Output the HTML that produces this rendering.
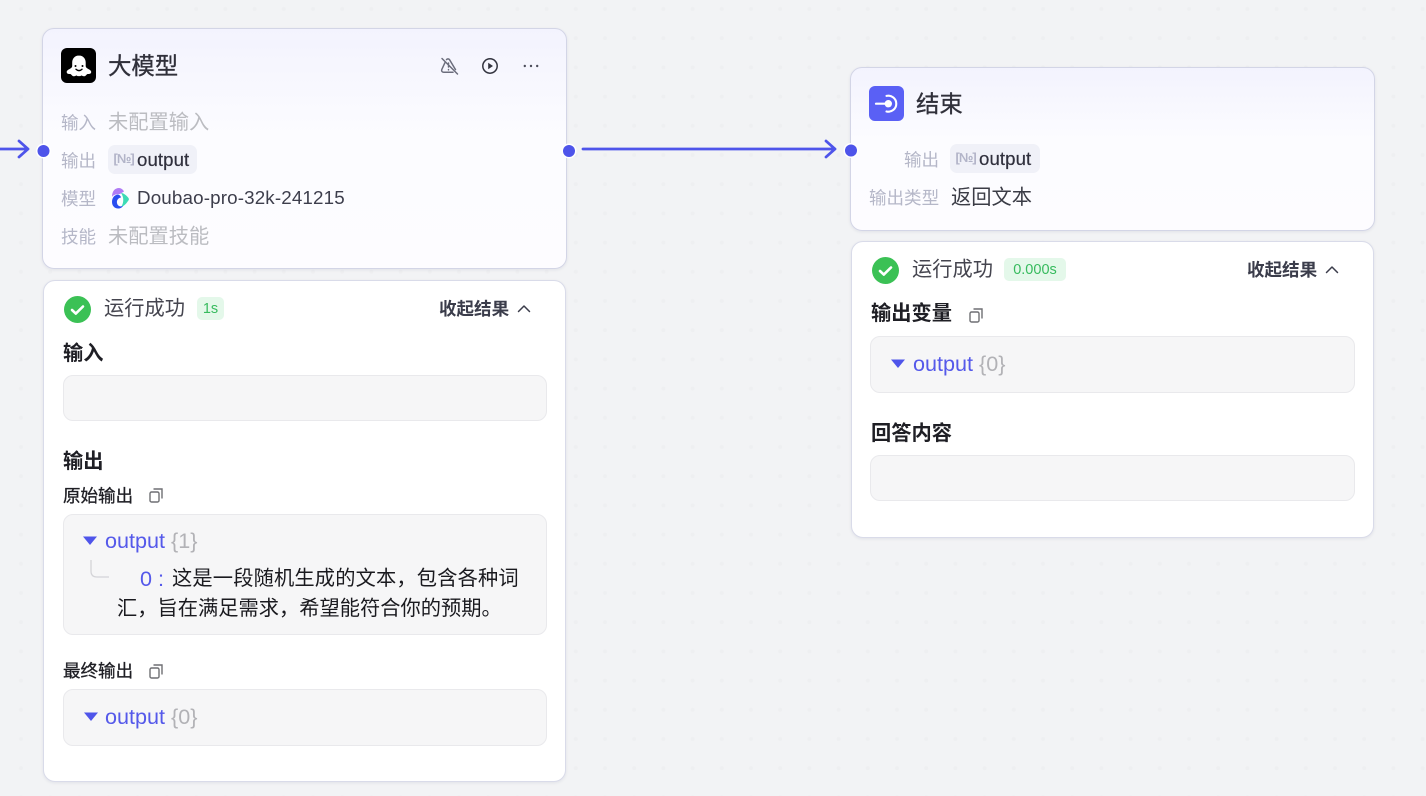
<!DOCTYPE html>
<html><head><meta charset="utf-8">
<style>
*{box-sizing:border-box;margin:0;padding:0}
html,body{width:1426px;height:796px;overflow:hidden;background:#f2f3f5}
body{position:relative;font-family:"Liberation Sans","Noto Sans CJK SC",sans-serif;color:#1d1c23}
.a{position:absolute;white-space:nowrap}
svg.a{display:block;overflow:visible}
.card{position:absolute;border:1px solid #d3d5e6;border-radius:12px;box-shadow:0 1px 3px rgba(30,30,80,.08)}
.head{background:linear-gradient(180deg,#f3f3fe 0,#fcfcff 45%,#fdfcff 100%)}
.res{background:#fff;border:1.5px solid #d9dbe9}
.box{position:absolute;background:#f6f6f7;border:1px solid #e9e9ec;border-radius:10px}
.lb{font-size:17.55px;line-height:24px;color:#b5b7c8}
.ph{font-size:20.25px;line-height:28px;color:#bbbcc1}
.t{font-size:23.4px;line-height:30px;color:#30303a;font-weight:400;-webkit-text-stroke:.3px #30303a}
.tag{position:absolute;background:#f0f1f8;border-radius:7px;height:29px}
.tag span{position:absolute;left:29px;top:4px;font-size:18.6px;line-height:22px;color:#30303d;letter-spacing:.1px;-webkit-text-stroke:.2px #30303d}
.no{position:absolute;left:5.5px;top:5px;font-size:13px;line-height:18px;color:#b2b4c8;font-weight:700;letter-spacing:-1px}
.ok{font-size:20.25px;line-height:26px;color:#45454f}
.col{font-size:17.55px;line-height:22px;color:#3b3d4b;font-weight:700}
.h{font-size:20.25px;line-height:26px;color:#1f1f25;font-weight:700}
.sub{font-size:17.55px;line-height:22px;color:#1f1f25;font-weight:400;-webkit-text-stroke:.3px #1f1f25}
.v{font-size:21.6px;line-height:26px;color:#5559ea}
.v i{font-style:normal;color:#b2b2b6;margin-left:6px}
.body{font-size:20.25px;line-height:32px;color:#1a1a1f}
.bdg{position:absolute;background:#e4f8ea;border-radius:5px;color:#37bb5e;font-size:14.5px;line-height:25px;height:23px;text-align:center}
</style></head><body>

<svg class="a" style="left:0;top:0" width="1426" height="796">
<defs><pattern id="d" x="6.5" y="-5.5" width="29.2" height="29.2" patternUnits="userSpaceOnUse"><circle cx="14.5" cy="14.5" r="2" fill="#eeeff1"/></pattern></defs>
<rect width="1426" height="796" fill="url(#d)"/>
<path d="M0 149H28M19 141l9 8-9 8" fill="none" stroke="#4e54ea" stroke-width="2.8" stroke-linecap="round" stroke-linejoin="round"/>
<path d="M583 149H835M826 141l9 8-9 8" fill="none" stroke="#4e54ea" stroke-width="2.8" stroke-linecap="round" stroke-linejoin="round"/>
</svg>

<!-- LLM node -->
<div class="card head" style="left:42px;top:28px;width:525px;height:241px"></div>
<svg class="a" style="left:61px;top:48px" width="35" height="35" viewBox="0 0 35 35">
<rect width="35" height="35" rx="6" fill="#000"/>
<path transform="translate(0 1)" fill="#fff" d="M18 6.500c-4 0-6.800 3-6.800 7v3.500c0 1-.8 2-2.200 2.800-1.500.9-3.300 1.700-3.300 3.200 0 1.700 1.800 2.200 3.400 2 .8 0 1.300.8 2 1.500.9.9 2.300 1 3.400.4.600-.3 1-.5 1.500-.2.900.6 3 .6 3.900 0 .5-.3.900-.1 1.500.2 1.100.6 2.500.5 3.400-.4.700-.7 1.200-1.500 2-1.500 1.600.2 3.400-.3 3.400-2 0-1.500-1.800-2.300-3.300-3.200-1.400-.8-2.200-1.800-2.200-2.800v-3.500c0-4-2.800-7-6.800-7z"/>
<circle cx="14.500" cy="18" r="1" fill="#000"/><circle cx="21.500" cy="18" r="1" fill="#000"/>
<path d="M15 21.200q3 2.800 6 0" fill="none" stroke="#000" stroke-width="1.400" stroke-linecap="round"/>
</svg>
<div class="a t" style="left:108px;top:51px">大模型</div>

<svg class="a" style="left:440px;top:57px" width="19" height="19" viewBox="0 0 19 19" fill="none" stroke="#6b6d7c" stroke-width="1.500" stroke-linecap="round" stroke-linejoin="round">
<path d="M5 5.500 1.800 12.500c-.6 1.400.2 2.700 1.800 2.700H13M6.500 2.600c.8-1 2.200-1 3 0l6 10M8.500 6v4M8.500 12.500v.4M2 1.500l15.500 15.500"/>
</svg>
<svg class="a" style="left:482px;top:58px" width="16" height="16" viewBox="0 0 16 16">
<circle cx="8" cy="8" r="7.200" fill="none" stroke="#33343f" stroke-width="1.500"/><path d="M6.200 4.800v6.400L11 8z" fill="#33343f"/>
</svg>
<svg class="a" style="left:523px;top:64px" width="16" height="4" viewBox="0 0 16 4" fill="#4c4d5a">
<circle cx="1.800" cy="2" r="1.200"/><circle cx="8" cy="2" r="1.200"/><circle cx="14.200" cy="2" r="1.200"/>
</svg>

<div class="a lb" style="left:61px;top:111px">输入</div>
<div class="a ph" style="left:108px;top:109px">未配置输入</div>
<div class="a lb" style="left:61px;top:149px">输出</div>
<div class="tag" style="left:108px;top:145px;width:89px"><div class="no">[№]</div><span>output</span></div>
<div class="a lb" style="left:61px;top:187px">模型</div>
<svg class="a" style="left:111px;top:188px" width="18" height="21" viewBox="0 0 18 21">
<path d="M1 9C1 3 4 0 8 0c2 0 4 1.500 5 3.500L9 6C5 6 2 7 1 9z" fill="#b07cf5"/>
<path d="M10 5c3 0 6 3 7.500 5 .6 1 .6 2-.5 3-2 3-4 5-7 6 3-4 3-10 0-14z" fill="#3ddbb5"/>
<path d="M7 6.500C3 7 1 10 1 14c0 4 3 7 7 6.500 2-.2 3.500-1.500 4-2.500-3 1-5.500 0-6-3-.5-2.500 1-5 4-5.500 0-1-1.500-2.800-3-3z" fill="#2a4df0"/>
</svg>
<div class="a" style="left:137px;top:186px;font-size:18.8px;line-height:24px;color:#3d3e4c;letter-spacing:.15px">Doubao-pro-32k-241215</div>
<div class="a lb" style="left:61px;top:225px">技能</div>
<div class="a ph" style="left:108px;top:223px">未配置技能</div>

<!-- LLM result -->
<div class="card res" style="left:43px;top:280px;width:523px;height:502px"></div>
<svg class="a" style="left:64px;top:296px" width="27" height="27" viewBox="0 0 27 27"><circle cx="13.500" cy="13.500" r="13.500" fill="#3bc155"/><path d="M8 14l3.800 3.600L19 10.500" fill="none" stroke="#fff" stroke-width="2.600" stroke-linecap="round" stroke-linejoin="round"/></svg>
<div class="a ok" style="left:104px;top:296px">运行成功</div>
<div class="bdg" style="left:197px;top:297px;width:27px">1s</div>
<div class="a col" style="left:439px;top:298px">收起结果</div>
<svg class="a" style="left:517px;top:304px" width="14" height="9" viewBox="0 0 14 9"><path d="M1.500 7.500 7 2l5.500 5.500" fill="none" stroke="#3b3d4b" stroke-width="1.500" stroke-linecap="round" stroke-linejoin="round"/></svg>
<div class="a h" style="left:63px;top:341px">输入</div>
<div class="box" style="left:63px;top:375px;width:484px;height:46px"></div>
<div class="a h" style="left:63px;top:449px">输出</div>
<div class="a sub" style="left:63px;top:485px">原始输出</div>
<svg class="a" style="left:149px;top:488px" width="14" height="15" viewBox="0 0 14 15" fill="none" stroke="#6e6f73" stroke-width="1.400"><rect x="1" y="4" width="9" height="10" rx="1.500"/><path d="M4.500 1H13v9.500"/></svg>
<div class="box" style="left:63px;top:514px;width:484px;height:121px"></div>
<svg class="a" style="left:83px;top:536px" width="14" height="10" viewBox="0 0 14 10"><path d="M0 .5h14L7 9z" fill="#4f55ea"/></svg>
<div class="a v" style="left:105px;top:528px">output<i>{1}</i></div>
<svg class="a" style="left:90px;top:560px" width="20" height="19" viewBox="0 0 20 19"><path d="M1 0v11c0 4 2 6 6 6h12" fill="none" stroke="#d4d4d8" stroke-width="1.300"/></svg>
<div class="a body" style="left:140px;top:563px;color:#5559ea;font-size:21.6px">0 :</div>
<div class="a body" style="left:172px;top:563px;letter-spacing:.15px">这是一段随机生成的文本，包含各种词</div>
<div class="a body" style="left:117px;top:593px">汇，旨在满足需求，希望能符合你的预期。</div>
<div class="a sub" style="left:63px;top:660px">最终输出</div>
<svg class="a" style="left:149px;top:664px" width="14" height="15" viewBox="0 0 14 15" fill="none" stroke="#6e6f73" stroke-width="1.400"><rect x="1" y="4" width="9" height="10" rx="1.500"/><path d="M4.500 1H13v9.500"/></svg>
<div class="box" style="left:63px;top:689px;width:484px;height:57px"></div>
<svg class="a" style="left:84px;top:712px" width="14" height="10" viewBox="0 0 14 10"><path d="M0 .5h14L7 9z" fill="#4f55ea"/></svg>
<div class="a v" style="left:105px;top:704px">output<i>{0}</i></div>

<!-- End node -->
<div class="card head" style="left:850px;top:67px;width:525px;height:164px"></div>
<svg class="a" style="left:869px;top:86px" width="35" height="35" viewBox="0 0 35 35">
<rect width="35" height="35" rx="6" fill="#5a60f5"/>
<path d="M7 17.700h11" stroke="#fff" stroke-width="2.200" stroke-linecap="round"/><circle cx="19.300" cy="17.700" r="3.700" fill="#fff"/>
<path d="M17.500 9.900A8 8 0 1 1 17.500 25.500" fill="none" stroke="#fff" stroke-width="2.100" stroke-linecap="round"/>
</svg>
<div class="a t" style="left:916px;top:89px">结束</div>
<div class="a lb" style="left:904px;top:148px">输出</div>
<div class="tag" style="left:950px;top:144px;width:90px"><div class="no">[№]</div><span>output</span></div>
<div class="a lb" style="left:869px;top:186px">输出类型</div>
<div class="a" style="left:951px;top:184px;font-size:20.25px;line-height:28px;color:#3b3c46">返回文本</div>

<!-- End result -->
<div class="card res" style="left:851px;top:241px;width:523px;height:297px"></div>
<svg class="a" style="left:872px;top:257px" width="27" height="27" viewBox="0 0 27 27"><circle cx="13.500" cy="13.500" r="13.500" fill="#3bc155"/><path d="M8 14l3.800 3.600L19 10.500" fill="none" stroke="#fff" stroke-width="2.600" stroke-linecap="round" stroke-linejoin="round"/></svg>
<div class="a ok" style="left:912px;top:257px">运行成功</div>
<div class="bdg" style="left:1004px;top:258px;width:62px">0.000s</div>
<div class="a col" style="left:1247px;top:259px">收起结果</div>
<svg class="a" style="left:1325px;top:265px" width="14" height="9" viewBox="0 0 14 9"><path d="M1.500 7.500 7 2l5.500 5.500" fill="none" stroke="#3b3d4b" stroke-width="1.500" stroke-linecap="round" stroke-linejoin="round"/></svg>
<div class="a h" style="left:871px;top:301px">输出变量</div>
<svg class="a" style="left:969px;top:308px" width="14" height="15" viewBox="0 0 14 15" fill="none" stroke="#6e6f73" stroke-width="1.400"><rect x="1" y="4" width="9" height="10" rx="1.500"/><path d="M4.500 1H13v9.500"/></svg>
<div class="box" style="left:870px;top:336px;width:485px;height:57px"></div>
<svg class="a" style="left:891px;top:359px" width="14" height="10" viewBox="0 0 14 10"><path d="M0 .5h14L7 9z" fill="#4f55ea"/></svg>
<div class="a v" style="left:913px;top:351px">output<i>{0}</i></div>
<div class="a h" style="left:871px;top:421px">回答内容</div>
<div class="box" style="left:870px;top:455px;width:485px;height:46px"></div>

<!-- ports -->
<svg class="a" style="left:0;top:0" width="1426" height="796">
<circle cx="43.500" cy="151" r="7.500" fill="#fff"/><circle cx="43.500" cy="151" r="6" fill="#4e54ea"/>
<circle cx="569" cy="151" r="7.500" fill="#fff"/><circle cx="569" cy="151" r="6" fill="#4e54ea"/>
<circle cx="851" cy="150.500" r="7.500" fill="#fff"/><circle cx="851" cy="150.500" r="6" fill="#4e54ea"/>
</svg>
</body></html>
